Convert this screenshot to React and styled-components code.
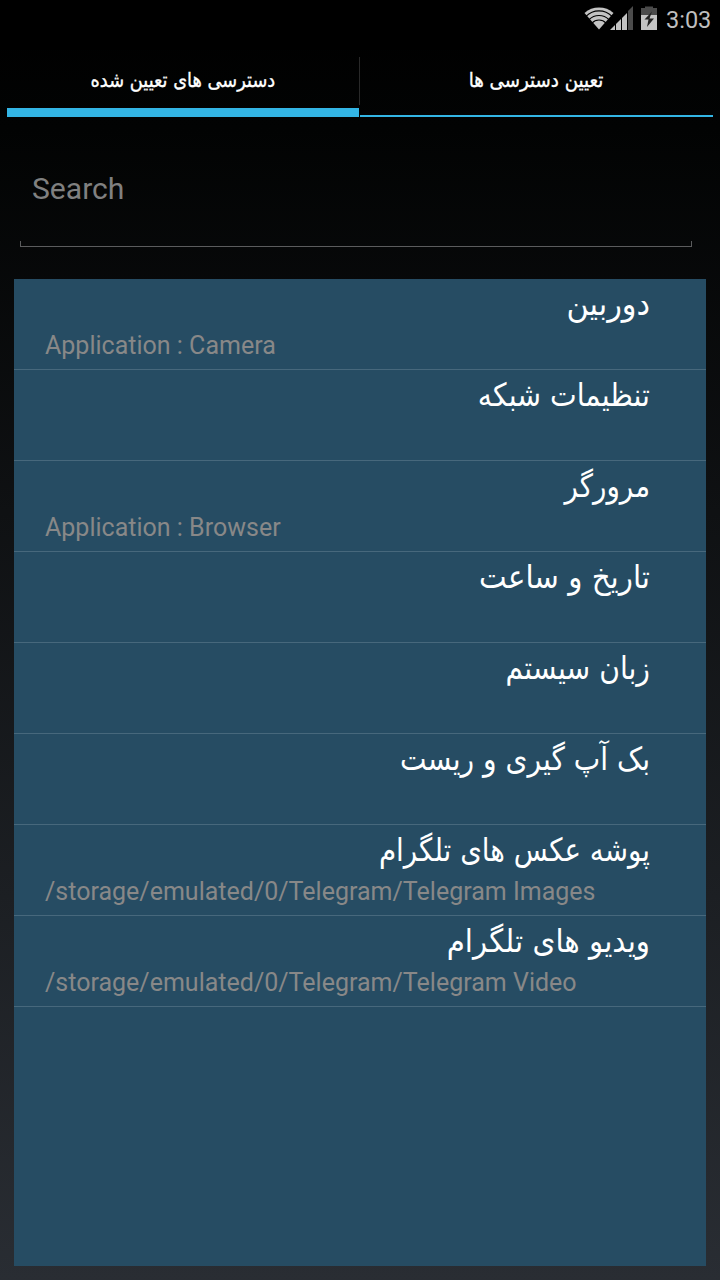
import React from 'react';
import styled, { createGlobalStyle } from 'styled-components';

const Global = createGlobalStyle`
  *{box-sizing:border-box}
  body{margin:0;background:#000}
`;
const Screen = styled.div`
  width:720px;height:1280px;overflow:hidden;display:flex;flex-direction:column;
  background:linear-gradient(#000 0%,#020303 10%,#292d33 100%);
  font-family:Roboto,"Noto Sans","DejaVu Sans",sans-serif;color:#fff;
`;
const StatusBar = styled.header`
  height:50px;flex:none;display:flex;justify-content:flex-end;align-items:flex-start;background:#000;
`;
const StatusIcons = styled.svg`
  width:76px;height:40px;flex:none;
`;
const Clock = styled.span`
  width:60px;font-size:23.5px;line-height:28px;padding:6px 0 0 6px;color:#bebebe;
`;
const Tabs = styled.nav`
  height:67px;flex:none;margin:0 7px;display:flex;
`;
const Tab = styled.div`
  width:${p => (p.$active ? 352 : 353)}px;height:67px;display:flex;justify-content:center;
  border-bottom:${p => (p.$active ? 9 : 2)}px solid #33b5e5;
`;
const Divider = styled.div`
  width:1px;height:48px;margin-top:7px;background:#292929;
`;
const Label = styled.span`
  white-space:nowrap;font:20px/30px "DejaVu Sans",sans-serif;padding-top:15px;
  -webkit-text-stroke:.35px #fff;transform:scaleX(${p => p.$scale});
`;
const SearchArea = styled.div`
  height:130px;flex:none;padding:54px 20px 0;
`;
const SearchField = styled.div`
  height:76px;padding:0 12px;font-size:30.1px;line-height:35px;color:#808080;
  display:flex;flex-direction:column;justify-content:space-between;
`;
const Underline = styled.div`
  height:6px;margin:0 -4px 0 -12px;border:1px solid #5b5c5d;border-top:0;
`;
const List = styled.main`
  width:692px;height:987px;margin:32px 14px 0;background:#264c63;
`;
const Row = styled.section`
  height:91px;border-bottom:1px solid #47687c;padding:0 56px 0 31px;display:flex;flex-direction:column;
`;
const Title = styled.div`
  direction:rtl;height:51px;font:32px/50px "DejaVu Sans",sans-serif;white-space:nowrap;
  transform:scaleX(${p => p.$scale});transform-origin:right;
`;
const Detail = styled.div`
  font-size:25.02px;line-height:32px;color:#888;white-space:nowrap;
`;

const rows = [
  ['دوربین', 'Application : Camera', .949],
  ['تنظیمات شبکه', '', .886],
  ['مرورگر', 'Application : Browser', .867],
  ['تاریخ و ساعت', '', .916],
  ['زبان سیستم', '', .882],
  ['بک آپ گیری و ریست', '', .878],
  ['پوشه عکس های تلگرام', '/storage/emulated/0/Telegram/Telegram Images', .867],
  ['ویدیو های تلگرام', '/storage/emulated/0/Telegram/Telegram Video', .915],
];

function Icons() {
  return (
    <StatusIcons viewBox="584 0 76 40">
      <path d="M584.500 13A22 22 0 0 1 613.500 13L599 29.500Z" fill="#c3c3c3" />
      <g fill="none" stroke="#000" strokeWidth="1.100">
        <path d="M586 16.300A18.300 18.300 0 0 1 612 16.300" />
        <path d="M589 19.700A14 14 0 0 1 609 19.700" />
        <path d="M592 23.100A9.400 9.400 0 0 1 606 23.100" />
      </g>
      <path d="M610 30L628 12V30Z" fill="#c3c3c3" />
      <path d="M628 30V11L633 6V30Z" fill="#4b4b4b" />
      <path d="M615.500 23V30M621.500 17V30M627.500 11V30" stroke="#000" />
      <path d="M641 30V8H645V6.500H653V8H657V30Z" fill="#4b4b4b" />
      <path d="M641 15H657V30H641Z" fill="#c3c3c3" />
      <path d="M652 11.500L644.500 19.500H648.500L647 27L654 18.500H649.500Z" fill="#222" />
    </StatusIcons>
  );
}

export default function App() {
  return (
    <>
      <Global />
      <Screen>
        <StatusBar><Icons /><Clock>3:03</Clock></StatusBar>
        <Tabs>
          <Tab $active><Label dir="rtl" $scale={.889}>دسترسی های تعیین شده</Label></Tab>
          <Divider />
          <Tab><Label dir="rtl" $scale={.91}>تعیین دسترسی ها</Label></Tab>
        </Tabs>
        <SearchArea><SearchField>Search<Underline /></SearchField></SearchArea>
        <List>
          {rows.map(([title, detail, scale]) => (
            <Row key={title}><Title $scale={scale}>{title}</Title><Detail>{detail}</Detail></Row>
          ))}
        </List>
      </Screen>
    </>
  );
}
